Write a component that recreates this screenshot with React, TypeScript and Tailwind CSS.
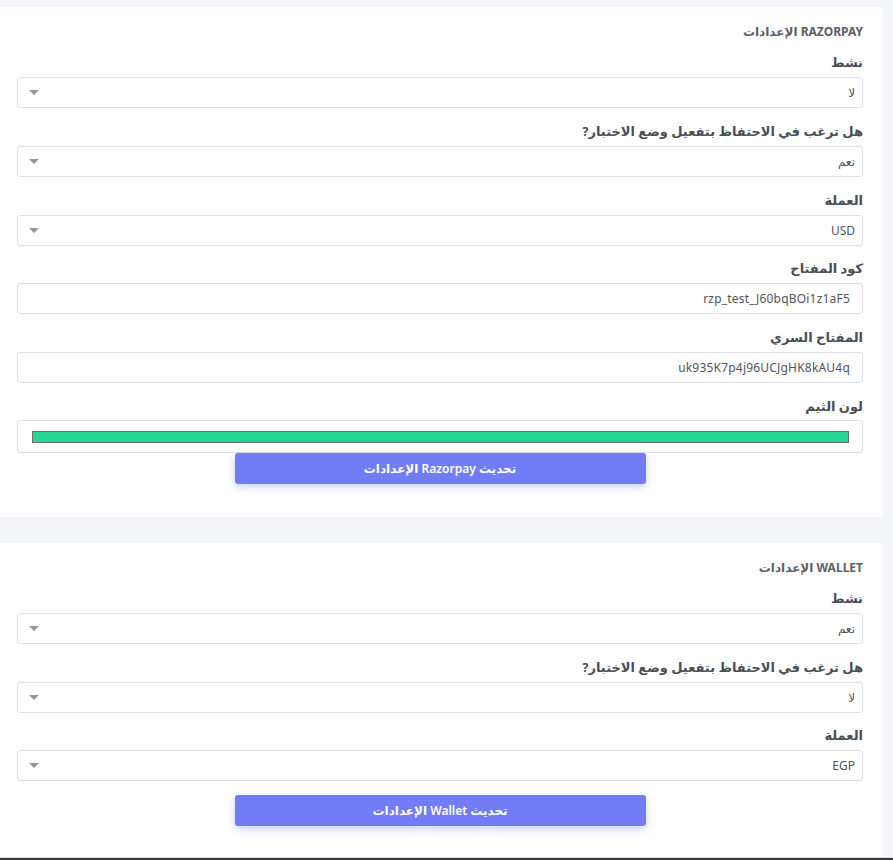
import React from "react";

const font = { fontFamily: '"Noto Sans", "DejaVu Sans", sans-serif' };

function Arrow() {
  return (
    <svg width="10" height="6" viewBox="0 0 10 6" className="shrink-0">
      <path d="M0 0 L10 0 L5 5 Z" fill="#8a99a3" />
    </svg>
  );
}

function Label({ children }: { children: React.ReactNode }) {
  return (
    <div className="h-4 mb-[7px] text-[13px] leading-4 font-bold text-[#4a4e55]">{children}</div>
  );
}

function SelectField({ label, value, mb = "mb-4" }: { label: string; value: string; mb?: string }) {
  return (
    <div className={mb}>
      <Label>{label}</Label>
      <div className="h-[31px] border border-[#dfe1e6] rounded-[3px] bg-white flex items-center justify-between pr-[7px] pl-[11px]">
        <span className="text-[12px] text-[#50555b]">{value}</span>
        <Arrow />
      </div>
    </div>
  );
}

function InputField({ label, value }: { label: string; value: string }) {
  return (
    <div className="mb-[15px]">
      <Label>{label}</Label>
      <div className="h-[31px] border border-[#dfe1e6] rounded-[3px] bg-white flex items-center pr-[12px]">
        <span className="text-[12px] text-[#50555b] tracking-[0.2px]">{value}</span>
      </div>
    </div>
  );
}

function Button({ children }: { children: React.ReactNode }) {
  return (
    <div className="flex justify-center">
      <div className="w-[411px] h-[31px] rounded-[3px] bg-[#717cf5] shadow-[0_3px_8px_rgba(113,124,245,0.35)] flex items-center justify-center text-white text-[12px] font-semibold">
        {children}
      </div>
    </div>
  );
}

export default function App() {
  return (
    <div style={font} className="w-[893px] h-[860px] bg-[#f4f5f9] overflow-hidden flex flex-col">
      <div className="h-[7px] shrink-0" />
      <div dir="rtl" className="w-[883px] h-[510px] bg-white rounded-r-[4px] pt-[17px] pr-[20px] pl-[17px] shrink-0">
        <div className="h-4 text-[12px] leading-4 font-bold text-[#5c6068] mb-[14px]">RAZORPAY الإعدادات</div>
        <SelectField label="نشط" value="لا" mb="mb-[15px]" />
        <SelectField label="هل ترغب في الاحتفاظ بتفعيل وضع الاختبار?" value="نعم" mb="mb-[15px]" />
        <SelectField label="العملة" value="USD" mb="mb-[14px]" />
        <InputField label="كود المفتاح" value="rzp_test_J60bqBOi1z1aF5" />
        <InputField label="المفتاح السري" value="uk935K7p4j96UCJgHK8kAU4q" />
        <div className="h-4 mb-[6px] text-[13px] leading-4 font-bold text-[#4a4e55]">لون الثيم</div>
        <div className="h-[33px] border border-[#dfe1e6] rounded-[3px] bg-white pr-[13px] pl-[14px] pt-[10px]">
          <div className="h-[12px] bg-[#26d694] border border-[#6e6e6e]" />
        </div>
        <Button>تحديث Razorpay الإعدادات</Button>
      </div>
      <div className="h-[26px] shrink-0" />
      <div dir="rtl" className="w-[883px] h-[314px] bg-white rounded-tr-[4px] pt-[17px] pr-[20px] pl-[17px] shrink-0">
        <div className="h-4 text-[12px] leading-4 font-bold text-[#5c6068] mb-[14px]">WALLET الإعدادات</div>
        <SelectField label="نشط" value="نعم" mb="mb-[15px]" />
        <SelectField label="هل ترغب في الاحتفاظ بتفعيل وضع الاختبار?" value="لا" mb="mb-[14px]" />
        <SelectField label="العملة" value="EGP" mb="mb-[14px]" />
        <Button>تحديث Wallet الإعدادات</Button>
      </div>
      <div className="h-[1px] bg-[#dcdde0] shrink-0" />
      <div className="h-[2px] bg-[#3a3a3a] shrink-0" />
    </div>
  );
}
